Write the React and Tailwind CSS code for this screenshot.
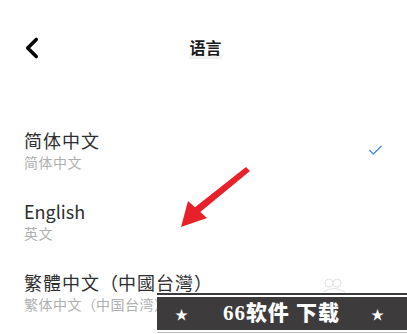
import { ChevronLeft, Check } from 'lucide-react';

const languages = [
  { name: '简体中文', sub: '简体中文', selected: true },
  { name: 'English', sub: '英文', latin: true },
  { name: '繁體中文（中國台灣）', sub: '繁体中文（中国台湾）' },
];

// full-width parens get their whole cell, as on the phone
function Cjk({ text }) {
  return text.split('').map((ch, i) => {
    if (ch === '（') return <span key={i} className="inline-block w-[1em] text-right">{ch}</span>;
    if (ch === '）') return <span key={i} className="inline-block w-[1em] text-left">{ch}</span>;
    return ch;
  });
}

export default function App() {
  return (
    <div
      className="relative w-[407px] h-[334px] overflow-hidden bg-white"
      style={{ fontFamily: '"Noto Sans CJK SC", "Noto Sans", sans-serif' }}>
      {/* Header */}
      <div className="relative flex items-center justify-center h-[94px]">
        <ChevronLeft className="absolute left-[15px] top-[31px] w-[34px] h-[34px] text-black" strokeWidth={2.5} />
        <span className="text-[16px] leading-[24px] font-bold text-[#1a1a1a] ml-[4px] bg-gradient-to-b from-white from-75% to-[#ececec]">语言</span>
      </div>

      {/* List */}
      <div className="flex flex-col gap-[27px] mt-[34px] pl-[24px] pr-[24px]">
        {languages.map((lang) => (
          <div key={lang.name} className="flex items-center justify-between">
            <div className="flex flex-col whitespace-nowrap">
              {lang.latin ? (
                <span className="text-[18px] leading-[24px] text-[#2e2e2e]">{lang.name}</span>
              ) : (
                <span className="text-[18px] leading-[24px] text-[#2e2e2e] tracking-[1px]"><Cjk text={lang.name} /></span>
              )}
              <span className="text-[14px] leading-[20px] text-[#b0b0b0] tracking-[0.5px]"><Cjk text={lang.sub} /></span>
            </div>
            {lang.selected && <Check className="w-[17px] h-[17px] text-[#4a8fe4] mr-[-1px]" strokeWidth={2} />}
          </div>
        ))}
      </div>

      {/* Red arrow */}
      <svg className="absolute left-0 top-0 pointer-events-none" width="407" height="334">
        <polygon points="246,167 250,171 199,213 194,208" fill="#e8202a" />
        <polygon points="181,227 188,201 207,218" fill="#e8202a" />
      </svg>

      {/* faint doodle */}
      <svg className="absolute left-[320px] top-[276px]" width="28" height="18" viewBox="0 0 28 18">
        <circle cx="9" cy="7" r="4" fill="none" stroke="#e2e2e2" strokeWidth="1" />
        <circle cx="17" cy="7" r="4" fill="none" stroke="#e2e2e2" strokeWidth="1" />
        <path d="M3 16 Q14 9 25 16" fill="none" stroke="#e2e2e2" strokeWidth="1" />
      </svg>

      {/* Watermark banner */}
      <div className="absolute left-[157px] top-[293px] w-[250px] flex flex-col">
        <div className="h-[2px] bg-[#3a3a3a]" />
        <div className="h-[2px]" />
        <div className="h-[33px] bg-[#3d3b3b] flex items-center pl-[18px] pr-[23px] justify-between">
          <span className="text-white text-[13px] leading-none">★</span>
          <span
            className="text-white text-[21px] font-black leading-none tracking-[1px] ml-[4px]"
            style={{ fontFamily: '"Liberation Serif", "Noto Sans CJK SC", serif' }}>
            66软件 下载
          </span>
          <span className="text-white text-[13px] leading-none">★</span>
        </div>
        <div className="h-[2px]" />
        <div className="h-[1px] bg-[#bdbdbd]" />
      </div>
    </div>
  );
}
